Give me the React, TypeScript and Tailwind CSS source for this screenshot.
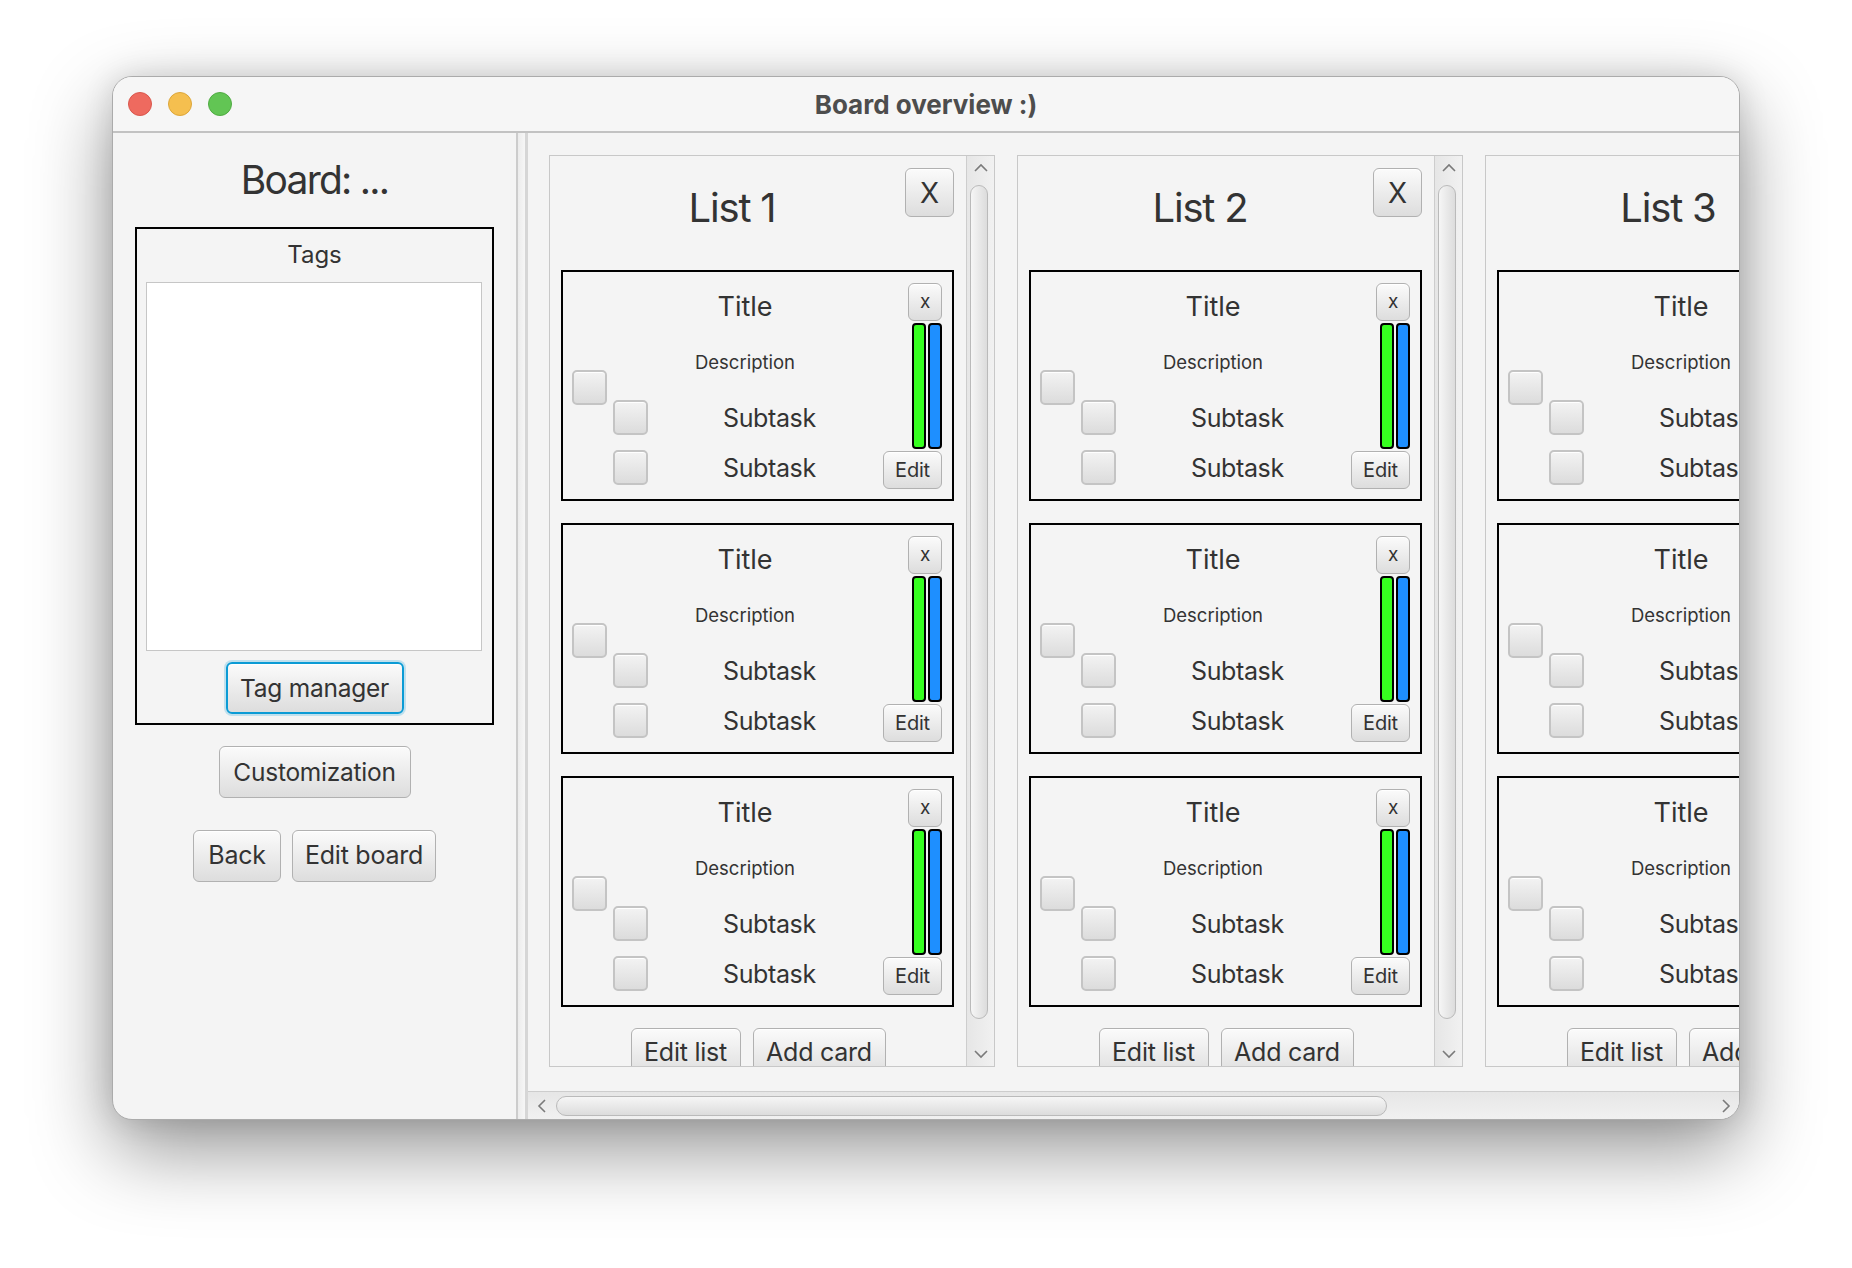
import React from 'react';

const font = "font-['Inter','Liberation_Sans',sans-serif]";
const btnBase =
  'rounded-[6px] bg-linear-to-b from-[#fbfbfb] to-[#dddddd] text-[#333333] flex items-center justify-center shrink-0 tracking-[-0.01em]';
const btn = `${btnBase} border border-[#b1b1b1] shadow-[inset_0_1px_0_#ffffff]`;
const focusedBtn = `${btnBase} border-2 border-[#0b9bd5] shadow-[0_0_0_2px_rgba(11,155,213,0.22),inset_0_1px_0_#ffffff]`;
const checkbox =
  'w-[35px] h-[35px] shrink-0 rounded-[5px] border-2 border-[#c4c4c4] bg-linear-to-b from-[#f3f3f3] to-[#dcdcdc] shadow-[inset_0_1px_0_#ffffff]';

function Chevron({ dir }: { dir: 'up' | 'down' | 'left' | 'right' }) {
  const d = {
    up: 'M2 9 L8 3 L14 9',
    down: 'M2 3 L8 9 L14 3',
    left: 'M9 2 L3 8 L9 14',
    right: 'M3 2 L9 8 L3 14',
  }[dir];
  const vertical = dir === 'up' || dir === 'down';
  return (
    <svg width={vertical ? 16 : 12} height={vertical ? 12 : 16} viewBox={vertical ? '0 0 16 12' : '0 0 12 16'}>
      <path d={d} fill="none" stroke="#7a7a7a" strokeWidth="1.6" />
    </svg>
  );
}

function SubtaskRow() {
  return (
    <div className="flex items-center h-[35px]">
      <div className={checkbox} />
      <span className="ml-[75px] text-[25px] leading-[30px] tracking-[-0.015em]">Subtask</span>
    </div>
  );
}

function Card() {
  return (
    <div className="w-[393px] h-[231px] shrink-0 border-2 border-black flex">
      <div className="flex-1 flex flex-col">
        <div className="pt-[19px] pl-[44px] text-center text-[27px] leading-[32px]">Title</div>
        <div className="mt-[27px] pl-[44px] text-center text-[18.5px] leading-[24px]">Description</div>
        <div className="mt-[-4px] flex">
          <div className={`ml-[9px] ${checkbox}`} />
          <div className="ml-[6px] pt-[30px] flex flex-col gap-[15px]">
            <SubtaskRow />
            <SubtaskRow />
          </div>
        </div>
      </div>
      <div className="w-[59px] mr-[10px] pt-[11px] flex flex-col items-end">
        <div className={`${btn} w-[34px] h-[38px] text-[19px] leading-none pb-[2px]`}>x</div>
        <div className="mt-[2px] flex gap-[2px] h-[126px]">
          <div className="w-[14px] h-full rounded-[4px] border-2 border-black bg-[#36ff1f]" />
          <div className="w-[14px] h-full rounded-[4px] border-2 border-black bg-[#1e8fff]" />
        </div>
        <div className={`${btn} mt-[2px] w-[59px] h-[38px] text-[20px]`}>Edit</div>
      </div>
    </div>
  );
}

function VScrollbar() {
  return (
    <div className="w-[28px] shrink-0 border-l border-[#cdcdcd] bg-linear-to-r from-[#e6e6e6] to-[#f1f1f1] flex flex-col">
      <div className="h-[24px] flex items-center justify-center">
        <Chevron dir="up" />
      </div>
      <div className="flex-1 pt-[5px] pl-[3px]">
        <div className="w-[18px] h-[834px] rounded-full border border-[#bababa] bg-linear-to-r from-[#f6f6f6] to-[#dcdcdc]" />
      </div>
      <div className="h-[24px] flex items-center justify-center">
        <Chevron dir="down" />
      </div>
    </div>
  );
}

function ListColumn({ name }: { name: string }) {
  return (
    <div className="w-[446px] h-[912px] shrink-0 border border-[#c8c8c8] flex overflow-hidden">
      <div className="flex-1 min-w-0 flex flex-col">
        <div className="flex items-start">
          <div className="flex-1 pl-[9px] mt-[28px] text-center text-[40px] leading-[48px] tracking-[-0.03em]">{name}</div>
          <div className={`${btn} mt-[12px] mr-[12px] w-[49px] h-[49px] text-[28px]`}>X</div>
        </div>
        <div className="mt-[38px] ml-[11px] flex flex-col gap-[22px]">
          <Card />
          <Card />
          <Card />
        </div>
        <div className="mt-[21px] flex justify-center gap-[12px]">
          <div className={`${btn} w-[110px] h-[50px] text-[25px]`}>Edit list</div>
          <div className={`${btn} w-[133px] h-[50px] text-[25px]`}>Add card</div>
        </div>
      </div>
      <VScrollbar />
    </div>
  );
}

export default function App() {
  return (
    <div className={`w-[1852px] h-[1268px] bg-white pt-[76px] pl-[112px] text-[#333333] ${font}`}>
      <div className="w-[1628px] h-[1044px] rounded-[20px] overflow-hidden border border-[#ababab] bg-[#f4f4f4] flex flex-col shadow-[0_30px_80px_rgba(0,0,0,0.42),0_0_30px_rgba(0,0,0,0.12)]">
        {/* title bar */}
        <div className="h-[56px] shrink-0 bg-[#f6f6f6] border-b-2 border-[#c2c2c2] flex items-center relative">
          <div className="flex gap-[16px] pl-[15px]">
            <div className="w-[24px] h-[24px] rounded-full bg-[#ee6a5f] border border-[#d9574d]" />
            <div className="w-[24px] h-[24px] rounded-full bg-[#f5bf4f] border border-[#dca63a]" />
            <div className="w-[24px] h-[24px] rounded-full bg-[#62c554] border border-[#50ab43]" />
          </div>
          <div className="absolute inset-0 flex items-center justify-center text-[26px] font-bold text-[#4d4d4d]">
            Board overview :)
          </div>
        </div>

        <div className="flex-1 flex min-h-0">
          {/* left panel */}
          <div className="w-[403px] shrink-0 flex flex-col items-center pt-[23px]">
            <div className="text-[39px] leading-[48px] tracking-[-0.045em]">Board: ...</div>
            <div className="mt-[23px] w-[359px] h-[498px] border-2 border-black flex flex-col items-center">
              <div className="pt-[11px] text-[24px] leading-[30px]">Tags</div>
              <div className="mt-[12px] w-[336px] h-[369px] bg-white border border-[#c6c6c6] -ml-[1px]" />
              <div className={`${focusedBtn} mt-[11px] w-[178px] h-[52px] text-[24.5px]`}>Tag manager</div>
            </div>
            <div className={`${btn} mt-[21px] w-[192px] h-[52px] text-[24.5px]`}>Customization</div>
            <div className="mt-[32px] flex gap-[11px]">
              <div className={`${btn} w-[88px] h-[52px] text-[25px]`}>Back</div>
              <div className={`${btn} w-[144px] h-[52px] text-[25px]`}>Edit board</div>
            </div>
          </div>

          {/* divider */}
          <div className="w-[12px] shrink-0 border-l-2 border-r-[3px] border-l-[#cccccc] border-r-[#d6d6d6] bg-linear-to-r from-[#ececec] to-[#f6f6f6]" />

          {/* board scroll pane */}
          <div className="flex-1 min-w-0 flex flex-col">
            <div className="flex-1 min-h-0 overflow-hidden flex gap-[22px] pt-[22px] pl-[21px]">
              <ListColumn name="List 1" />
              <ListColumn name="List 2" />
              <ListColumn name="List 3" />
            </div>
            <div className="h-[28px] shrink-0 border-t border-[#cdcdcd] bg-linear-to-b from-[#e6e6e6] to-[#f1f1f1] flex items-center">
              <div className="w-[28px] flex justify-center">
                <Chevron dir="left" />
              </div>
              <div className="w-[831px] h-[20px] rounded-full border border-[#bababa] bg-linear-to-b from-[#f6f6f6] to-[#dcdcdc]" />
              <div className="flex-1" />
              <div className="w-[26px] flex justify-center">
                <Chevron dir="right" />
              </div>
            </div>
          </div>
        </div>
      </div>
    </div>
  );
}
